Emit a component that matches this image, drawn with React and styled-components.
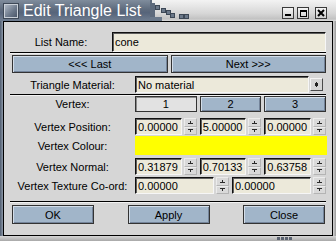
import React from 'react';
import styled, { createGlobalStyle } from 'styled-components';

const Global = createGlobalStyle`
  html, body { margin: 0; padding: 0; background: #c8c8c8; }
  body { font-family: "Liberation Sans", Arial, sans-serif; }
`;

const Window = styled.div`
  width: 336px;
  height: 241px;
  display: flex;
  flex-direction: column;
  overflow: hidden;
  font-family: "Liberation Sans", Arial, sans-serif;
  font-size: 11px;
  color: #000;
`;

const TitleBar = styled.div`
  height: 21px;
  flex: none;
  display: flex;
  align-items: stretch;
  background: linear-gradient(#f3f3f3, #d6d6d6 65%, #c2c2c2 90%, #dcdcdc);
`;

const TitleTab = styled.div`
  width: 150px;
  flex: none;
  display: flex;
  align-items: center;
  gap: 4px;
  padding-left: 4px;
  box-sizing: border-box;
  background: linear-gradient(#7f8c9c, #5e6b7d 45%, #56647a 60%, #6f7d90);
`;

const AppIcon = styled.div`
  width: 12px;
  height: 12px;
  border: 1px solid #c9d0d8;
  outline: 1px solid #3e4957;
  background: linear-gradient(135deg, #aeb8c4, #6a7789 60%, #4c586a);
`;

const TitleText = styled.span`
  color: #fff;
  font-size: 16px;
  line-height: 21px;
  white-space: nowrap;
  margin-left: 1px;
`;

const Steps = styled.svg`
  flex: none;
  display: block;
`;

const WinButtons = styled.div`
  margin-left: auto;
  display: flex;
  align-items: flex-start;
  padding-top: 7px;
  padding-right: 9px;
  gap: 2px;
`;

const WinButton = styled.div`
  width: 12px;
  height: 12px;
  box-sizing: border-box;
  border: 1px solid #3a3a3a;
  background: linear-gradient(#f4f4f4, #cfcfcf);
  display: flex;
  align-items: center;
  justify-content: center;
  margin-left: ${p => p.$gap || 0}px;
`;

const Middle = styled.div`
  flex: 1;
  display: flex;
  min-height: 0;
`;

const SideFrame = styled.div`
  width: 3px;
  flex: none;
  background: ${p => p.$left
    ? 'linear-gradient(to right, #4f5d70, #8c98a8)'
    : 'linear-gradient(to right, #d4d4d4, #9a9a9a)'};
`;

const BottomFrame = styled.div`
  height: 5px;
  flex: none;
  display: flex;
  justify-content: flex-end;
  padding-right: 43px;
  background: linear-gradient(#d6d6d6, #a8a8a8);
`;

const Body = styled.div`
  flex: 1;
  border: 1px solid #000;
  background: #d6d6d6;
  display: flex;
  flex-direction: column;
  padding: 10px 6px 11px 6px;
  box-sizing: border-box;
`;

const FormRow = styled.div`
  display: grid;
  grid-template-columns: ${p => p.$label || 125}px 1fr;
  height: ${p => p.$h}px;
  margin-top: ${p => p.$mt || 0}px;
  flex: none;
`;

const Label = styled.div`
  display: flex;
  align-items: center;
  justify-content: center;
  white-space: nowrap;
`;

const Field = styled.div`
  flex: 1;
  min-width: 0;
  background: #ece9da;
  border-style: solid;
  border-width: 1px;
  border-color: #111 #f6f6f6 #f6f6f6 #111;
  box-shadow: inset 1px 1px #5e5e5e;
  display: flex;
  align-items: center;
  padding-left: 2px;
  box-sizing: border-box;
  white-space: nowrap;
  overflow: hidden;
`;

const Separator = styled.div`
  height: 2px;
  flex: none;
  box-sizing: border-box;
  border-top: 1px solid #000;
  border-bottom: 1px solid #f2f2f2;
  margin-top: ${p => p.$mt || 0}px;
`;

const NavRow = styled.div`
  display: grid;
  grid-template-columns: 1fr 1fr;
  gap: 3px;
  height: 18px;
  margin-top: ${p => p.$mt || 0}px;
  padding-left: 2px;
  flex: none;
`;

const Button = styled.div`
  box-sizing: border-box;
  border: 1px solid #333;
  background: ${p => (p.$active ? '#e2e2e2' : '#a1b5c9')};
  box-shadow: ${p => (p.$active
    ? 'inset 1px 1px #8a8a8a'
    : 'inset 1px 1px #d3dde8, inset -1px -1px #74849a')};
  display: flex;
  align-items: center;
  justify-content: center;
  white-space: nowrap;
  width: ${p => (p.$w ? `${p.$w}px` : 'auto')};
`;

const ValueLine = styled.div`
  display: flex;
  align-items: ${p => p.$center ? 'center' : 'stretch'};
  gap: ${p => p.$gap ?? 2}px;
  padding-right: ${p => p.$pr || 0}px;
  min-width: 0;
`;

const Cells = styled.div`
  display: grid;
  grid-template-columns: repeat(${p => p.$n}, 1fr);
  gap: 3px;
  min-width: 0;
`;

const Spin = styled.div`
  width: 13px;
  flex: none;
  display: flex;
  flex-direction: column;
`;

const SpinBtn = styled.div`
  flex: 1;
  background: #d9d9d9;
  box-sizing: border-box;
  border-style: solid;
  border-width: 1px;
  border-color: #ececec #b4b4b4 #b4b4b4 #ececec;
  display: flex;
  align-items: center;
  justify-content: center;
`;

const ComboButton = styled.div`
  width: 13px;
  height: 13px;
  flex: none;
  box-sizing: border-box;
  border-style: solid;
  border-width: 1px;
  border-color: #f4f4f4 #4a4a4a #4a4a4a #f4f4f4;
  background: #d6d6d6;
  display: flex;
  align-items: center;
  justify-content: center;
`;

const Swatch = styled.div`
  background: #ffff00;
  margin-right: -1px;
`;

const BottomRow = styled.div`
  display: flex;
  justify-content: space-between;
  height: 19px;
  margin-top: ${p => p.$mt || 0}px;
  padding: 0 1px 0 2px;
  flex: none;
`;

const Arrow = ({ down }) => (
  <svg width="5" height="3" viewBox="0 0 5 3" shapeRendering="crispEdges">
    {down ? (
      <>
        <rect x="0" y="0" width="5" height="1" fill="#2a2a2a" />
        <rect x="2" y="1" width="1" height="2" fill="#2a2a2a" />
      </>
    ) : (
      <>
        <rect x="2" y="0" width="1" height="2" fill="#2a2a2a" />
        <rect x="0" y="2" width="5" height="1" fill="#2a2a2a" />
      </>
    )}
  </svg>
);

const Spinner = () => (
  <Spin>
    <SpinBtn><Arrow /></SpinBtn>
    <SpinBtn><Arrow down /></SpinBtn>
  </Spin>
);

const SpinField = ({ value }) => (
  <ValueLine>
    <Field>{value}</Field>
    <Spinner />
  </ValueLine>
);

const StepsArt = () => {
  const sq = [
    [5, 5], [11, 8], [16, 10], [20, 13], [29, 14], [34, 14],
  ];
  return (
    <Steps width="42" height="21" viewBox="0 0 42 21" shapeRendering="crispEdges">
      <polygon points="0,0 2,0 2,3 5,3 5,21 0,21" fill="#5d6a7c" />
      <rect x="0" y="17" width="12" height="4" fill="#6b798b" />
      {sq.map(([x, y], i) => (
        <rect key={i} x={x + 0.5} y={y + 0.5} width="4" height="4" fill="#6b7889" stroke="#3d4856" />
      ))}
    </Steps>
  );
};

const Grip = () => (
  <svg width="16" height="5" viewBox="0 0 16 5" shapeRendering="crispEdges">
    {[0, 4, 8, 12].map(x => (
      <rect key={x} x={x} y="1" width="3" height="3" fill="#5a6270" />
    ))}
  </svg>
);

export default function App() {
  return (
    <>
      <Global />
      <Window>
        <TitleBar>
          <TitleTab>
            <AppIcon />
            <TitleText>Edit Triangle List</TitleText>
          </TitleTab>
          <StepsArt />
          <WinButtons>
            <WinButton>
              <svg width="6" height="8" viewBox="0 0 6 8" shapeRendering="crispEdges">
                <rect x="0" y="5" width="6" height="2" fill="#000" />
              </svg>
            </WinButton>
            <WinButton $gap={1}>
              <svg width="7" height="7" viewBox="0 0 7 7" shapeRendering="crispEdges">
                <rect x="0" y="0" width="7" height="2" fill="#000" />
                <rect x="0" y="0" width="1" height="7" fill="#000" />
                <rect x="6" y="0" width="1" height="7" fill="#000" />
                <rect x="0" y="6" width="7" height="1" fill="#000" />
              </svg>
            </WinButton>
            <WinButton $gap={4}>
              <svg width="8" height="8" viewBox="0 0 8 8">
                <path d="M1 1L7 7M7 1L1 7" stroke="#000" strokeWidth="2" />
              </svg>
            </WinButton>
          </WinButtons>
        </TitleBar>
        <Middle>
          <SideFrame $left />
          <Body>
            <FormRow $label={102} $h={20}>
              <Label>List Name:</Label>
              <Field>cone</Field>
            </FormRow>
            <Separator />
            <NavRow $mt={1}>
              <Button>&lt;&lt;&lt; Last</Button>
              <Button>Next &gt;&gt;&gt;</Button>
            </NavRow>
            <FormRow $h={17} $mt={3}>
              <Label>Triangle Material:</Label>
              <ValueLine $center $pr={3} $gap={1}>
                <Field style={{ alignSelf: 'stretch' }}>No material</Field>
                <ComboButton>
                  <svg width="3" height="5" viewBox="0 0 3 5" shapeRendering="crispEdges">
                    <rect x="1" y="0" width="1" height="5" fill="#222" />
                    <rect x="0" y="1" width="3" height="3" fill="#222" />
                  </svg>
                </ComboButton>
              </ValueLine>
            </FormRow>
            <Separator $mt={1} />
            <FormRow $h={16}>
              <Label>Vertex:</Label>
              <Cells $n={3}>
                <Button $active>1</Button>
                <Button>2</Button>
                <Button>3</Button>
              </Cells>
            </FormRow>
            <FormRow $h={17} $mt={6}>
              <Label>Vertex Position:</Label>
              <Cells $n={3}>
                <SpinField value="0.00000" />
                <SpinField value="5.00000" />
                <SpinField value="0.00000" />
              </Cells>
            </FormRow>
            <FormRow $h={19} $mt={1}>
              <Label>Vertex Colour:</Label>
              <Swatch />
            </FormRow>
            <FormRow $h={17} $mt={3}>
              <Label>Vertex Normal:</Label>
              <Cells $n={3}>
                <SpinField value="0.31879" />
                <SpinField value="0.70133" />
                <SpinField value="0.63758" />
              </Cells>
            </FormRow>
            <FormRow $h={17} $mt={2}>
              <Label>Vertex Texture Co-ord:</Label>
              <Cells $n={2}>
                <SpinField value="0.00000" />
                <SpinField value="0.00000" />
              </Cells>
            </FormRow>
            <Separator $mt={7} />
            <BottomRow $mt={2}>
              <Button $w={82}>OK</Button>
              <Button $w={82}>Apply</Button>
              <Button $w={82}>Close</Button>
            </BottomRow>
          </Body>
          <SideFrame />
        </Middle>
        <BottomFrame>
          <Grip />
        </BottomFrame>
      </Window>
    </>
  );
}
